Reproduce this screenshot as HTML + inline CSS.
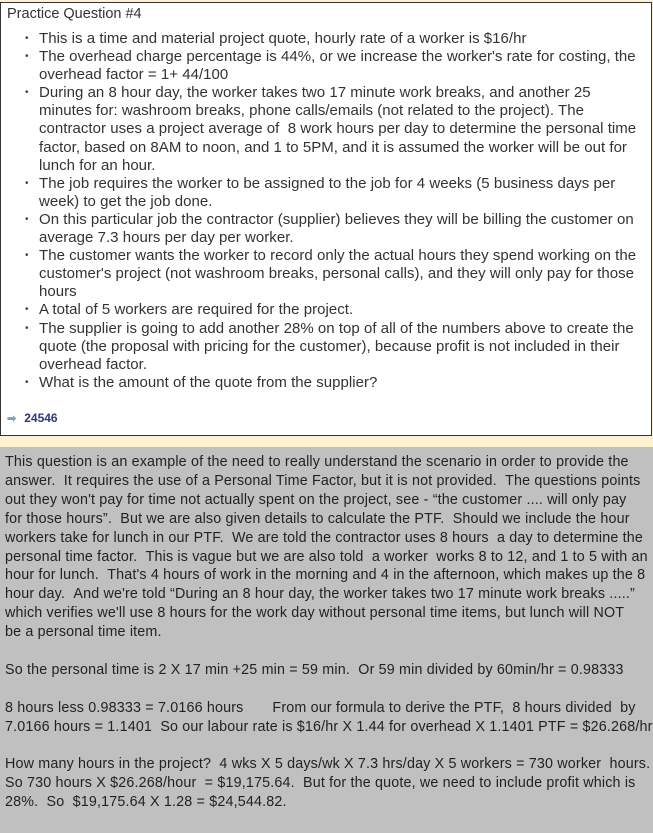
<!DOCTYPE html>
<html><head><meta charset="utf-8"><style>
body{margin:0;width:653px;height:833px;overflow:hidden;background:#fdf3d2;font-family:"Liberation Sans",sans-serif;}
.box{position:absolute;left:0;top:2px;width:650px;height:432px;background:#fff;border:1px solid #333;}
.title{position:absolute;left:6px;top:3px;font-size:14.5px;color:#333;}
ul{position:absolute;left:24px;top:27px;margin:0;padding:0;list-style:none;width:630px;font-size:15px;line-height:18.1px;color:#333;white-space:nowrap;letter-spacing:0.03px;}
li{position:relative;padding-left:14px;}
li:before{content:"•";position:absolute;left:0;font-size:10px;color:#444;}
.ans{position:absolute;left:6px;top:408px;font-size:12px;color:#2a3a7c;font-weight:bold;}
.ans span{color:#8a9ac8;margin-right:8px;font-size:11px;}
.gray{position:absolute;left:0;top:447px;width:653px;height:386px;background:#c0c0c0;}
.g{position:absolute;left:5px;top:6px;width:648px;font-size:14.3px;line-height:18.9px;color:#222;letter-spacing:0.17px;white-space:nowrap;}
.g p{margin:0 0 18.9px 0;}
</style></head><body>
<div class="box">
<div class="title">Practice Question #4</div>
<ul>
<li>This is a time and material project quote, hourly rate of a worker is $16/hr</li>
<li>The overhead charge percentage is 44%, or we increase the worker's rate for costing, the<br>overhead factor = 1+ 44/100</li>
<li>During an 8 hour day, the worker takes two 17 minute work breaks, and another 25<br>minutes for: washroom breaks, phone calls/emails (not related to the project). The<br>contractor uses a project average of &nbsp;8 work hours per day to determine the personal time<br>factor, based on 8AM to noon, and 1 to 5PM, and it is assumed the worker will be out for<br>lunch for an hour.</li>
<li>The job requires the worker to be assigned to the job for 4 weeks (5 business days per<br>week) to get the job done.</li>
<li>On this particular job the contractor (supplier) believes they will be billing the customer on<br>average 7.3 hours per day per worker.</li>
<li>The customer wants the worker to record only the actual hours they spend working on the<br>customer's project (not washroom breaks, personal calls), and they will only pay for those<br>hours</li>
<li>A total of 5 workers are required for the project.</li>
<li>The supplier is going to add another 28% on top of all of the numbers above to create the<br>quote (the proposal with pricing for the customer), because profit is not included in their<br>overhead factor.</li>
<li>What is the amount of the quote from the supplier?</li>
</ul>
<div class="ans"><span>➡</span>24546</div>
</div>
<div class="gray"><div class="g">
<p>This question is an example of the need to really understand the scenario in order to provide the<br>answer. &nbsp;It requires the use of a Personal Time Factor, but it is not provided. &nbsp;The questions points<br>out they won't pay for time not actually spent on the project, see - “the customer .... will only pay<br>for those hours”. &nbsp;But we are also given details to calculate the PTF. &nbsp;Should we include the hour<br>workers take for lunch in our PTF. &nbsp;We are told the contractor uses 8 hours &nbsp;a day to determine the<br>personal time factor. &nbsp;This is vague but we are also told &nbsp;a worker &nbsp;works 8 to 12, and 1 to 5 with an<br>hour for lunch. &nbsp;That's 4 hours of work in the morning and 4 in the afternoon, which makes up the 8<br>hour day. &nbsp;And we're told “During an 8 hour day, the worker takes two 17 minute work breaks .....”<br>which verifies we'll use 8 hours for the work day without personal time items, but lunch will NOT<br>be a personal time item.</p>
<p>So the personal time is 2 X 17 min +25 min = 59 min. &nbsp;Or 59 min divided by 60min/hr = 0.98333</p>
<p>8 hours less 0.98333 = 7.0166 hours &nbsp; &nbsp; &nbsp; From our formula to derive the PTF, &nbsp;8 hours divided &nbsp;by<br>7.0166 hours = 1.1401 &nbsp;So our labour rate is $16/hr X 1.44 for overhead X 1.1401 PTF = $26.268/hr</p>
<p>How many hours in the project? &nbsp;4 wks X 5 days/wk X 7.3 hrs/day X 5 workers = 730 worker &nbsp;hours.<br>So 730 hours X $26.268/hour &nbsp;= $19,175.64. &nbsp;But for the quote, we need to include profit which is<br>28%. &nbsp;So &nbsp;$19,175.64 X 1.28 = $24,544.82.</p>
</div></div>
</body></html>
